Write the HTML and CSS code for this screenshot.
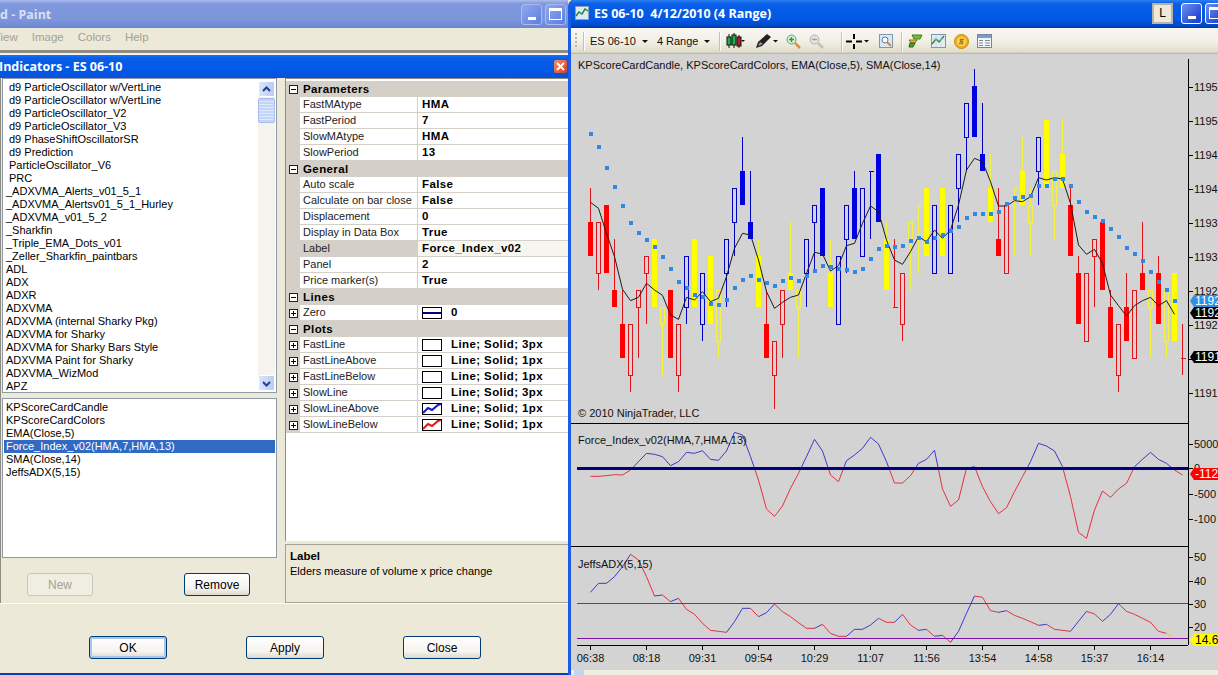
FILE: index.html
```html
<!DOCTYPE html>
<html lang="en">
<head>
    <meta charset="UTF-8">
    <title>ES 06-10 Indicators</title>
    <link rel="stylesheet" href="styles.css">
</head>
<body>

<div class="desktop">

    <!-- Paint window behind, indicators dialog in front -->
    <div class="left-side">
        <div class="paint-title">
            <span class="paint-name">d - Paint</span>
            <span class="win-btn inactive"><span class="min-mark"></span></span>
            <span class="win-btn inactive"><span class="max-mark"></span></span>
        </div>
        <div class="paint-menu">
            <span class="first-menu">View</span>
            <span>Image</span>
            <span>Colors</span>
            <span>Help</span>
        </div>
        <div class="paint-edge"></div>

        <div class="dialog">
            <div class="dialog-title">
                <span class="dialog-name">Indicators - ES 06-10</span>
                <span class="close-btn">
                    <svg width="13" height="13" viewBox="0 0 13 13"><path d="M3 3l7 7M10 3l-7 7" stroke="#fff" stroke-width="2"/></svg>
                </span>
            </div>

            <div class="dialog-body">
                <div class="dialog-left">
                    <div class="list-box available">
                        <ul class="list-items">
                            <li class="indent">d9 ParticleOscillator w/VertLine</li>
                            <li class="indent">d9 ParticleOscillator w/VertLine</li>
                            <li class="indent">d9 ParticleOscillator_V2</li>
                            <li class="indent">d9 ParticleOscillator_V3</li>
                            <li class="indent">d9 PhaseShiftOscillatorSR</li>
                            <li class="indent">d9 Prediction</li>
                            <li class="indent">ParticleOscillator_V6</li>
                            <li class="indent">PRC</li>
                            <li>_ADXVMA_Alerts_v01_5_1</li>
                            <li>_ADXVMA_Alertsv01_5_1_Hurley</li>
                            <li>_ADXVMA_v01_5_2</li>
                            <li>_Sharkfin</li>
                            <li>_Triple_EMA_Dots_v01</li>
                            <li>_Zeller_Sharkfin_paintbars</li>
                            <li>ADL</li>
                            <li>ADX</li>
                            <li>ADXR</li>
                            <li>ADXVMA</li>
                            <li>ADXVMA (internal Sharky Pkg)</li>
                            <li>ADXVMA for Sharky</li>
                            <li>ADXVMA for Sharky Bars Style</li>
                            <li>ADXVMA Paint for Sharky</li>
                            <li>ADXVMA_WizMod</li>
                            <li>APZ</li>
                        </ul>
                        <div class="scrollbar">
                            <span class="scroll-btn">
                                <svg width="9" height="7" viewBox="0 0 9 7"><path d="M1 5l3.5-3.5L8 5" fill="none" stroke="#24408a" stroke-width="2"/></svg>
                            </span>
                            <span class="scroll-thumb"></span>
                            <span class="scroll-fill"></span>
                            <span class="scroll-btn">
                                <svg width="9" height="7" viewBox="0 0 9 7"><path d="M1 2l3.5 3.5L8 2" fill="none" stroke="#24408a" stroke-width="2"/></svg>
                            </span>
                        </div>
                    </div>

                    <div class="list-box configured">
                        <ul class="list-items">
                            <li>KPScoreCardCandle</li>
                            <li>KPScoreCardColors</li>
                            <li>EMA(Close,5)</li>
                            <li class="selected">Force_Index_v02(HMA,7,HMA,13)</li>
                            <li>SMA(Close,14)</li>
                            <li>JeffsADX(5,15)</li>
                        </ul>
                    </div>

                    <div class="list-actions">
                        <button class="xp-btn small" disabled>New</button>
                        <button class="xp-btn small">Remove</button>
                    </div>
                </div>

                <div class="dialog-right">
                    <div class="prop-grid">
                        <div class="prop-cat"><span class="exp"></span>Parameters</div>
                        <div class="prop-row"><span class="gutter"></span><span class="prop-name">FastMAtype</span><span class="prop-value">HMA</span></div>
                        <div class="prop-row"><span class="gutter"></span><span class="prop-name">FastPeriod</span><span class="prop-value">7</span></div>
                        <div class="prop-row"><span class="gutter"></span><span class="prop-name">SlowMAtype</span><span class="prop-value">HMA</span></div>
                        <div class="prop-row"><span class="gutter"></span><span class="prop-name">SlowPeriod</span><span class="prop-value">13</span></div>

                        <div class="prop-cat"><span class="exp"></span>General</div>
                        <div class="prop-row"><span class="gutter"></span><span class="prop-name">Auto scale</span><span class="prop-value">False</span></div>
                        <div class="prop-row"><span class="gutter"></span><span class="prop-name">Calculate on bar close</span><span class="prop-value">False</span></div>
                        <div class="prop-row"><span class="gutter"></span><span class="prop-name">Displacement</span><span class="prop-value">0</span></div>
                        <div class="prop-row"><span class="gutter"></span><span class="prop-name">Display in Data Box</span><span class="prop-value">True</span></div>
                        <div class="prop-row active"><span class="gutter"></span><span class="prop-name">Label</span><span class="prop-value">Force_Index_v02</span></div>
                        <div class="prop-row"><span class="gutter"></span><span class="prop-name">Panel</span><span class="prop-value">2</span></div>
                        <div class="prop-row"><span class="gutter"></span><span class="prop-name">Price marker(s)</span><span class="prop-value">True</span></div>

                        <div class="prop-cat"><span class="exp"></span>Lines</div>
                        <div class="prop-row"><span class="gutter"><span class="exp plus"></span></span><span class="prop-name">Zero</span><span class="prop-value"><span class="swatch"><svg width="18" height="10" viewBox="0 0 18 10"><path d="M0 5h18" stroke="#00007f" stroke-width="2"/></svg></span>0</span></div>

                        <div class="prop-cat"><span class="exp"></span>Plots</div>
                        <div class="prop-row"><span class="gutter"><span class="exp plus"></span></span><span class="prop-name">FastLine</span><span class="prop-value"><span class="swatch"></span>Line; Solid; 3px</span></div>
                        <div class="prop-row"><span class="gutter"><span class="exp plus"></span></span><span class="prop-name">FastLineAbove</span><span class="prop-value"><span class="swatch"></span>Line; Solid; 1px</span></div>
                        <div class="prop-row"><span class="gutter"><span class="exp plus"></span></span><span class="prop-name">FastLineBelow</span><span class="prop-value"><span class="swatch"></span>Line; Solid; 1px</span></div>
                        <div class="prop-row"><span class="gutter"><span class="exp plus"></span></span><span class="prop-name">SlowLine</span><span class="prop-value"><span class="swatch"></span>Line; Solid; 3px</span></div>
                        <div class="prop-row"><span class="gutter"><span class="exp plus"></span></span><span class="prop-name">SlowLineAbove</span><span class="prop-value"><span class="swatch"><svg width="18" height="10" viewBox="0 0 18 10"><path d="M0 9l5-5 4 2 6-5 3-1" fill="none" stroke="#1a1ad0" stroke-width="2"/></svg></span>Line; Solid; 1px</span></div>
                        <div class="prop-row"><span class="gutter"><span class="exp plus"></span></span><span class="prop-name">SlowLineBelow</span><span class="prop-value"><span class="swatch"><svg width="18" height="10" viewBox="0 0 18 10"><path d="M0 9l5-5 4 2 6-5 3-1" fill="none" stroke="#e01a1a" stroke-width="2"/></svg></span>Line; Solid; 1px</span></div>
                    </div>

                    <div class="prop-help">
                        <div class="help-title">Label</div>
                        <div>Elders measure of volume x price change</div>
                    </div>
                </div>
            </div>

            <div class="dialog-footer">
                <button class="xp-btn default">OK</button>
                <button class="xp-btn">Apply</button>
                <button class="xp-btn">Close</button>
            </div>
        </div>
    </div>

    <!-- Chart window -->
    <div class="chart-win">
        <div class="chart-title">
            <svg class="title-icon" width="14" height="14" viewBox="0 0 14 14">
                <rect x="0.5" y="0.5" width="13" height="13" fill="#dfe8f4" stroke="#8aa0b8"/>
                <path d="M1 10l3-4 3 2 3-5 3 2" fill="none" stroke="#1f8a3a" stroke-width="1.5"/>
            </svg>
            <span class="chart-name">ES 06-10  4/12/2010 (4 Range)</span>
            <span class="link-btn">L</span>
            <span class="win-btn"><span class="min-mark"></span></span>
            <span class="win-btn cut"><span class="max-mark"></span></span>
        </div>

        <div class="toolbar">
            <span class="gripper"></span>
            <span class="tool-sep"></span>
            <span class="tool-drop first">ES 06-10<i class="caret"></i></span>
            <span class="tool-drop">4 Range<i class="caret"></i></span>
            <span class="tool-sep"></span>
            <span class="tool-icon">
                <svg width="19" height="16" viewBox="0 0 19 16"><path d="M3 1v14M8 0v15M13 2v13" stroke="#111"/><rect x="1" y="4" width="4" height="8" fill="#22b14c" stroke="#111"/><rect x="6" y="2" width="4" height="10" fill="#22b14c" stroke="#111"/><rect x="11" y="4" width="4" height="9" fill="#b02020" stroke="#111"/><path d="M15 7h4l-2 2z" fill="#111"/></svg>
            </span>
            <span class="tool-icon pen">
                <svg width="23" height="16" viewBox="0 0 23 16"><path d="M1 15l2-6 9-8 4 3-9 9z" fill="#222"/><path d="M3 13l2-4 3 2z" fill="#999"/><path d="M18 7h5l-2.500 2.500z" fill="#111"/></svg>
            </span>
            <span class="tool-icon">
                <svg width="15" height="15" viewBox="0 0 15 15"><circle cx="5.500" cy="5.500" r="4.500" fill="#d8f0d8" stroke="#5aa070"/><path d="M3 5.500h5M5.500 3v5" stroke="#2f9a40" stroke-width="1.500"/><path d="M9 9l5 5" stroke="#e09040" stroke-width="2.500"/></svg>
            </span>
            <span class="tool-icon">
                <svg width="15" height="15" viewBox="0 0 15 15"><circle cx="5.500" cy="5.500" r="4.500" fill="#e4e4e0" stroke="#b0b0aa"/><path d="M3 5.500h5" stroke="#a0a09a" stroke-width="1.500"/><path d="M9 9l5 5" stroke="#c0c0ba" stroke-width="2.500"/></svg>
            </span>
            <span class="tool-sep wide"></span>
            <span class="tool-icon cross">
                <svg width="23" height="15" viewBox="0 0 23 15"><path d="M0 7.500h6M10 7.500h6M8 0v5M8 10v5" stroke="#000" stroke-width="2"/><path d="M18 6h5l-2.500 2.500z" fill="#111"/></svg>
            </span>
            <span class="tool-icon">
                <svg width="14" height="14" viewBox="0 0 14 14"><rect x="0.500" y="0.500" width="13" height="13" fill="#dbe7f5" stroke="#7f96b4"/><circle cx="6" cy="6" r="3" fill="#fff" stroke="#5c7896"/><path d="M8 8l4 4" stroke="#d08a3a" stroke-width="2"/></svg>
            </span>
            <span class="tool-sep"></span>
            <span class="tool-icon">
                <svg width="15" height="14" viewBox="0 0 15 14"><path d="M4 1h10l-2 4H6z" fill="#6fbf3a" stroke="#4a7a20"/><path d="M1 6h8l-2 3H3z" fill="#e8c030" stroke="#8a7010"/><path d="M2 9h5l-2 4H1z" fill="#4a9a30" stroke="#30601c"/></svg>
            </span>
            <span class="tool-icon">
                <svg width="15" height="14" viewBox="0 0 15 14"><rect x="0.500" y="0.500" width="14" height="13" fill="#e4ecf6" stroke="#7f96b4"/><path d="M1 10l4-5 3 3 5-6" fill="none" stroke="#2f8a40" stroke-width="1.500"/><path d="M1 5h13M5 1v12M10 1v12" stroke="#b4c4d8" stroke-width="0.500"/></svg>
            </span>
            <span class="tool-icon">
                <svg width="15" height="15" viewBox="0 0 15 15"><circle cx="7.500" cy="7.500" r="7" fill="#f0b020" stroke="#c08810"/><circle cx="7.500" cy="7.500" r="4.500" fill="#f8d468"/><path d="M10 5.500H6.500v2h2v2H5" fill="none" stroke="#b07808" stroke-width="1.400"/></svg>
            </span>
            <span class="tool-icon">
                <svg width="15" height="14" viewBox="0 0 15 14"><rect x="0.500" y="0.500" width="14" height="13" fill="#f2f6fb" stroke="#6f88a8"/><rect x="1" y="1" width="13" height="3" fill="#7f9cc4"/><path d="M2 6.500h4M8 6.500h5M2 9h4M8 9h5M2 11.500h4M8 11.500h5" stroke="#7f8ea4"/></svg>
            </span>
        </div>

        <div class="chart-area">
            <div class="pane pane-price">
                <svg id="price-chart" width="647" height="370" viewBox="571 54 647 370"></svg>
                <div class="pane-label">KPScoreCardCandle, KPScoreCardColors, EMA(Close,5), SMA(Close,14)</div>
                <div class="pane-copy">© 2010 NinjaTrader, LLC</div>
            </div>
            <div class="pane pane-force">
                <svg id="force-chart" width="647" height="123" viewBox="571 424 647 123"></svg>
                <div class="pane-label">Force_Index_v02(HMA,7,HMA,13)</div>
            </div>
            <div class="pane pane-adx">
                <svg id="adx-chart" width="647" height="123" viewBox="571 547 647 123"></svg>
                <div class="pane-label">JeffsADX(5,15)</div>
            </div>
        </div>

        <div class="chart-status"><span class="status-tab"></span></div>
    </div>
</div>

<script src="chart.js"></script>
</body>
</html>
```

FILE: styles.css
```css
* {
    box-sizing: border-box;
}

body {
    margin: 0;
    font-family: 'Liberation Sans', Arial, sans-serif;
    font-size: 11px;
    color: #000;
    background-color: #ece9d8;
}

.desktop {
    display: flex;
    width: 1218px;
    height: 675px;
    overflow: hidden;
}

/* left side: paint + dialog */
.left-side {
    display: flex;
    flex-direction: column;
    width: 568px;
    flex-shrink: 0;
}

.paint-title {
    display: flex;
    align-items: center;
    gap: 3px;
    height: 28px;
    padding-right: 2px;
    background: linear-gradient(#a9bcec 0, #7f97dc 4px, #7d95da 70%, #6c86d2 100%);
}

.paint-name {
    flex: 1;
    font-family: 'Open Sans', sans-serif;
    font-size: 12.5px;
    font-weight: bold;
    color: #d7e0f4;
}

.win-btn {
    display: flex;
    align-items: center;
    justify-content: center;
    width: 21px;
    height: 21px;
    border: 1px solid #fff;
    border-radius: 3px;
    background: linear-gradient(135deg, #6f90f0, #2a50d8 70%, #1c3cc0);
    flex-shrink: 0;
}

.win-btn.inactive {
    border-color: #a9bcec;
    background: linear-gradient(135deg, #8fa8ec, #5c7ee0);
}

.win-btn.cut {
    margin-right: -8px;
}

.min-mark {
    width: 8px;
    height: 3px;
    margin-top: 8px;
    background-color: #fff;
}

.max-mark {
    width: 13px;
    height: 12px;
    border: 1px solid #fff;
    border-top-width: 3px;
}

.paint-menu {
    display: flex;
    gap: 14px;
    align-items: center;
    height: 22px;
    padding-bottom: 4px;
    color: #a3a194;
    font-size: 11.5px;
    background-color: #ece9d8;
}

.first-menu {
    margin-left: -7px;
}

.paint-edge {
    height: 5px;
    background: linear-gradient(#8e8c80 0, #8e8c80 3px, #f2f2ec 3px);
}

.dialog {
    flex: 1;
    display: flex;
    flex-direction: column;
    border-bottom: 2px solid #0a3fb8;
    background-color: #ece9d8;
}

.dialog-title {
    display: flex;
    align-items: center;
    justify-content: space-between;
    height: 23px;
    padding-right: 1px;
    background: linear-gradient(#1e74f0 0, #0a5ee8 3px, #0058e6 70%, #0a50d8 100%);
}

.dialog-name {
    margin-left: -1px;
    font-family: 'Open Sans', sans-serif;
    font-size: 12.5px;
    font-weight: bold;
    color: #fff;
}

.close-btn {
    display: flex;
    width: 13px;
    height: 13px;
    border: 0;
    border-radius: 2px;
    background: linear-gradient(135deg, #f09070, #d83c1c);
}

.dialog-body {
    display: flex;
    height: 526px;
    border-bottom: 1px solid #fff;
}

.dialog-left {
    width: 285px;
    padding-left: 1px;
    border-left: 1px solid #8e8c80;
    flex-shrink: 0;
}

.list-box {
    display: flex;
    width: 275px;
    border: 1px solid #8e9aa8;
    background-color: #fff;
    overflow: hidden;
}

.available {
    height: 315px;
    padding: 2px 1px 1px 3px;
}

.configured {
    height: 160px;
    margin-top: 5px;
    padding: 2px 1px 1px 1px;
}

.list-items {
    flex: 1;
    margin: 0;
    padding: 0;
    list-style: none;
}

.list-items li {
    height: 13px;
    line-height: 13px;
    white-space: nowrap;
}

.available .list-items li.indent {
    padding-left: 3px;
}

.configured .list-items li {
    padding-left: 2px;
}

.configured .list-items {
    padding-top: 0;
}

.configured .list-items li.selected {
    color: #fff;
    background-color: #316ac5;
}

.scrollbar {
    display: flex;
    flex-direction: column;
    width: 17px;
    flex-shrink: 0;
    background-color: #f4f3ee;
}

.scroll-btn {
    display: flex;
    align-items: center;
    justify-content: center;
    height: 16px;
    border: 1px solid #fff;
    border-radius: 2px;
    background: linear-gradient(90deg, #dce6fb, #b8cbf4);
}

.scroll-thumb {
    height: 25px;
    margin-top: 1px;
    border: 1px solid #a8bcec;
    border-radius: 2px;
    background: repeating-linear-gradient(#c4d4f8 0, #c4d4f8 2px, #e0e8fc 2px, #e0e8fc 3px);
}

.scroll-fill {
    flex: 1;
}

.list-actions {
    display: flex;
    justify-content: space-between;
    width: 223px;
    margin: 15px 0 0 25px;
}

.xp-btn {
    width: 78px;
    height: 23px;
    padding: 0;
    font-family: inherit;
    font-size: 12px;
    color: #000;
    border: 1px solid #003c74;
    border-radius: 3px;
    background: linear-gradient(#fff, #f4f3ee 70%, #dcd8cc);
}

.xp-btn.small {
    width: 66px;
}

.xp-btn.default {
    box-shadow: inset 0 0 0 2px #a8c4ee;
}

.xp-btn:disabled {
    color: #a5a294;
    border-color: #c9c7ba;
    background: #f0eee2;
}

.dialog-right {
    flex: 1;
    display: flex;
    flex-direction: column;
    gap: 3px;
}

.prop-grid {
    height: 463px;
    padding-top: 2px;
    background-color: #fff;
    border-left: 1px solid #8e8c80;
    border-top: 1px solid #8e8c80;
    overflow: hidden;
}

.prop-cat {
    display: flex;
    align-items: center;
    height: 16px;
    padding-left: 3px;
    font-weight: bold;
    letter-spacing: 0.4px;
    font-size: 11.5px;
    background-color: #d4d0c8;
}

.exp {
    flex-shrink: 0;
    width: 9px;
    height: 9px;
    margin-right: 5px;
    border: 1px solid #222;
    background: linear-gradient(#000, #000) center / 5px 1px no-repeat #fff;
}

.exp.plus {
    margin: 0;
    background:
        linear-gradient(#000, #000) center / 5px 1px no-repeat,
        linear-gradient(#000, #000) center / 1px 5px no-repeat,
        #fff;
}

.prop-row {
    display: flex;
    height: 16px;
    line-height: 15px;
    border-bottom: 1px solid #d4d0c8;
}

.gutter {
    display: flex;
    align-items: center;
    justify-content: center;
    width: 14px;
    margin-bottom: -1px;
    flex-shrink: 0;
    background-color: #d4d0c8;
}

.prop-name {
    width: 118px;
    padding-left: 3px;
    flex-shrink: 0;
    color: #222;
    white-space: nowrap;
    border-right: 1px solid #d4d0c8;
}

.prop-value {
    display: flex;
    align-items: center;
    padding-left: 4px;
    flex: 1;
    font-weight: bold;
    font-size: 11.5px;
    letter-spacing: 0.4px;
    white-space: nowrap;
}

.prop-row.active .prop-name {
    background-color: #d4d0c8;
}

.prop-row.active .prop-value {
    background-color: #f6f5f0;
}

.swatch {
    display: flex;
    width: 20px;
    height: 12px;
    margin-right: 9px;
    border: 1px solid #000;
    background-color: #fff;
    flex-shrink: 0;
}

.prop-help {
    flex: 1;
    padding: 4px 4px;
    line-height: 15px;
    font-size: 11px;
    border: 1px solid #a5a294;
    border-right: 0;
}

.help-title {
    font-weight: bold;
    font-size: 11.5px;
}

.dialog-footer {
    display: flex;
    gap: 79px;
    padding: 32px 0 0 89px;
}

/* chart window */
.chart-win {
    flex: 1;
    display: flex;
    flex-direction: column;
    border-left: 3px solid #1a5ce8;
    border-top-left-radius: 6px;
    min-width: 0;
}

.chart-title {
    display: flex;
    align-items: center;
    height: 28px;
    padding-left: 4px;
    padding-bottom: 2px;
    background: linear-gradient(#2c80f2 0, #0a5ee8 4px, #0058e4 70%, #0048c8 92%, #0038a0 100%);
}

.title-icon {
    flex-shrink: 0;
}

.chart-name {
    flex: 1;
    margin-left: 5px;
    font-family: 'Open Sans', sans-serif;
    font-size: 12.5px;
    font-weight: bold;
    color: #fff;
    white-space: pre;
}

.link-btn {
    display: flex;
    align-items: center;
    justify-content: center;
    width: 21px;
    height: 21px;
    margin-right: 8px;
    font-size: 12px;
    border: 2px solid #b8b4a4;
    background-color: #ece9d8;
}

.chart-title .win-btn {
    margin-right: 3px;
}

.chart-title .win-btn.cut {
    margin-right: -8px;
}

.toolbar {
    display: flex;
    align-items: center;
    height: 26px;
    padding-left: 4px;
    background: linear-gradient(#f8f7f2, #f2f0e6 50%, #e0ddcc 92%, #b4b29c);
}

.gripper {
    width: 2px;
    height: 16px;
    margin-right: 6px;
    background: repeating-linear-gradient(#b8b6a8 0, #b8b6a8 2px, transparent 2px, transparent 4px);
}

.tool-sep {
    width: 1px;
    height: 19px;
    margin: 0 6px 0 0;
    background-color: #c4c2b2;
    box-shadow: 1px 0 0 #fff;
}

.tool-sep.wide {
    margin-left: 9px;
    margin-right: 4px;
}

.tool-drop {
    display: flex;
    align-items: center;
    gap: 6px;
    margin-right: 9px;
    font-size: 11px;
    color: #111;
}

.caret {
    width: 0;
    height: 0;
    border: 3px solid transparent;
    border-top: 3px solid #111;
    border-bottom: 0;
}

.tool-icon {
    display: flex;
    align-items: center;
    margin-right: 8px;
}

.tool-icon.pen {
    margin-left: 2px;
}

.tool-icon.cross {
    margin-right: 10px;
}

.tool-icon:last-child {
    margin-right: 0;
}

.chart-area {
    flex: 1;
    display: flex;
    flex-direction: column;
    background-color: #d3d3d3;
    overflow: hidden;
}

.pane {
    position: relative;
    flex-shrink: 0;
}

.pane svg {
    display: block;
    font-family: 'Liberation Sans', Arial, sans-serif;
    font-size: 11px;
}

.pane-price {
    height: 370px;
}

.pane-force,
.pane-adx {
    height: 123px;
}

.pane-label {
    position: absolute;
    left: 7px;
    top: 5px;
    color: #111;
    white-space: nowrap;
}

.pane-force .pane-label {
    top: 10px;
}

.pane-adx .pane-label {
    top: 11px;
}

.pane-copy {
    position: absolute;
    left: 7px;
    top: 353px;
    color: #111;
}

.chart-status {
    height: 5px;
    padding-left: 3px;
    background-color: #f0eee2;
}

.status-tab {
    display: block;
    width: 10px;
    height: 5px;
    background-color: #c4d4f0;
}
```

FILE: chart.js
```js
// first bar sits at x=590.5, one bar every 8px
const barX = i => 590.5 + 8 * i;

// price levels are 17px apart, y = 68.7 + 17.02 * level
const level = k => Math.round(68.7 + 17.02 * k);

// [type, wick top, body top, body bottom, wick bottom]
// R/B/Y solid, r/b/y hollow
const candles = [
    ['R',7,9,11,11], ['r',9,9,12,13], ['R',8,8,12,12], ['R',10,13,14,14], ['R',13,15,17,17],
    ['r',15,15,18,19], ['r',13,13,14,17], ['r',11,11,12,15], ['Y',10,10,14,14], ['y',14,14,15,18],
    ['R',13,13,17,17], ['r',15,15,18,19], ['b',11,11,14,15], ['Y',10,10,14,14], ['b',12,12,15,16],
    ['Y',11,11,15,15], ['y',13,13,16,17], ['b',10,10,12,14], ['b',7,7,9,11], ['B',4,6,8,8],
    ['B',6,9,10,10], ['Y',10,11,14,14], ['R',13,15,17,17], ['r',16,16,18,20], ['r',13,13,15,17],
    ['Y',9,12,13,13], ['y',13,13,14,17], ['b',10,10,12,14], ['b',8,8,9,12], ['B',7,7,11,11],
    ['Y',10,12,14,14], ['b',11,11,15,15], ['b',8,8,10,12], ['B',6,7,10,10], ['b',7,7,11,11],
    ['B',6,6,6,10], ['B',5,5,9,9], ['Y',9,10,13,13], ['R',10,14,14,14], ['r',12,12,15,16],
    ['y',9,9,10,13], ['Y',8,8,8,12], ['Y',7,7,11,11], ['b',8,8,12,12], ['Y',7,7,11,11],
    ['b',8,8,12,12], ['b',5,5,7,9], ['b',2,2,4,6], ['B',0,1,4,4], ['B',2,5,6,6],
    ['Y',5,7,9,9], ['R',7,10,11,11], ['r',8,8,12,12], ['Y',7,7,7,11], ['Y',4,6,8,8],
    ['y',7,8,9,11], ['b',4,4,6,8], ['Y',3,3,7,7], ['y',6,6,8,10], ['Y',3,5,7,7],
    ['R',7,8,11,11], ['R',11,12,15,15], ['r',12,12,16,16], ['r',10,10,11,14], ['R',9,9,13,13],
    ['R',13,14,17,17], ['r',15,15,18,19], ['R',12,14,16,16], ['r',13,13,17,17], ['R',9,12,13,13],
    ['y',13,13,14,17], ['R',11,12,15,15], ['y',13,13,16,17], ['Y',12,12,16,16], ['R',15,17,17,18]
];

const colors = { r: '#e01418', b: '#0000c0', y: '#f4f43c' };
const solid = { R: '#ff0000', B: '#0000e0', Y: '#ffff00' };

// line and dots are read in crop units, y = 60 + v / 3
const smaLine = [427,445,520,590,688,722,712,670,690,706,765,778,712,720,695,725,715,650,565,520,525,600,695,745,727,712,705,640,577,582,633,617,557,550,490,438,455,540,600,613,575,530,545,510,535,510,435,330,295,305,365,438,438,422,425,410,353,360,353,357,430,555,583,568,610,705,737,768,737,722,712,737,722,763];
const emaDots = [221,261,323,380,437,488,518,539,561,590,626,665,683,705,710,731,734,719,683,659,647,659,668,677,662,653,662,647,632,617,620,626,629,635,626,596,566,557,561,557,543,533,546,533,525,512,500,473,461,461,461,455,431,413,410,407,379,377,358,356,377,425,455,470,482,506,530,563,581,602,635,665,689,722];

// lower panes, y = 420 + v / 3
const forceLine = [169,169,167,164,165,150,125,100,103,110,137,125,97,100,92,118,121,93,37,45,110,180,267,289,258,205,160,110,58,93,165,185,122,105,85,52,72,125,189,189,167,130,118,91,207,259,240,145,140,200,245,281,263,215,170,125,70,78,93,140,230,337,355,270,213,232,207,190,140,118,97,118,130,150,165];
const adxLine = [517,490,490,470,440,403,420,470,528,525,545,535,568,583,610,631,634,637,605,565,565,590,578,552,575,590,608,625,625,613,640,649,649,628,628,615,595,607,607,583,615,631,628,649,646,667,634,580,528,532,572,577,572,586,595,605,616,613,628,631,634,604,574,582,604,583,551,574,583,595,607,634,640,655];

const timeLabels = ['06:38','08:18','09:31','09:54','10:29','11:07','11:56','13:54','14:58','15:37','16:14'];

function line(x1, y1, x2, y2, color, width) {
    return `<line x1="${x1}" y1="${y1}" x2="${x2}" y2="${y2}" stroke="${color}" stroke-width="${width || 1}"/>`;
}

function crisp(content) {
    return `<g shape-rendering="crispEdges">${content}</g>`;
}

function label(x, y, text, anchor) {
    return `<text x="${x}" y="${y}" fill="#111" text-anchor="${anchor || 'start'}">${text}</text>`;
}

function drawCandle(c, i) {
    const type = c[0];
    const x = barX(i);
    const lower = type.toLowerCase();
    const wickColor = colors[lower];
    const top = level(c[2]);
    const bottom = level(c[3]);
    let out = '';

    if (c[1] < c[2]) out += line(x, level(c[1]), x, top, type === 'Y' ? '#f4f43c' : wickColor);
    if (c[4] > c[3]) out += line(x, bottom, x, level(c[4]), type === 'Y' ? '#f4f43c' : wickColor);

    if (c[2] === c[3]) {
        // doji, just a tick
        out += line(x - 2, top + 0.5, x + 3, top + 0.5, wickColor);
    } else if (type === lower) {
        out += `<rect x="${x - 2}" y="${top + 0.5}" width="4" height="${bottom - top}" fill="none" stroke="${colors[lower]}"/>`;
    } else {
        out += `<rect x="${x - 2.5}" y="${top}" width="5" height="${bottom - top}" fill="${solid[type]}"/>`;
    }
    return out;
}

function tag(y, color, textColor, text) {
    const h = 6;
    const points = `1190,${y} 1194,${y - h} 1218,${y - h} 1218,${y + h} 1194,${y + h}`;
    return `<polygon points="${points}" fill="${color}"/>` +
        `<text x="1195" y="${y + 4}" fill="${textColor}" font-size="12">${text}</text>`;
}

function axisTick(y, text) {
    return crisp(line(1188, y + 0.5, 1193, y + 0.5, '#000')) + label(1194, y + 4, text);
}

function polyPoints(values, toY) {
    return values.map((v, i) => barX(i) + ',' + toY(v)).join(' ');
}

function drawPrice() {
    const toY = v => 60 + v / 3;
    let out = crisp(candles.map(drawCandle).join(''));

    out += `<polyline points="${polyPoints(smaLine, toY)}" fill="none" stroke="#1c1c1c"/>`;
    out += crisp(emaDots.map((v, i) => `<rect x="${barX(i) - 2}" y="${Math.round(toY(v)) - 2}" width="4" height="4" fill="#3088e4"/>`).join(''));

    const ticks = [[87,'1195'],[121,'1195'],[155,'1194'],[189,'1194'],[223,'1193'],[257,'1193'],[291,'1192'],[325,'1192'],[359,'1191'],[393,'1191']];
    out += ticks.map(t => axisTick(t[0], t[1])).join('');
    out += crisp(line(1188.5, 59, 1188.5, 424, '#000') + line(571, 423.5, 1188, 423.5, '#000'));
    out += tag(301, '#2e8fe6', '#fff', '1192');
    out += tag(313, '#000', '#fff', '1192');
    out += tag(357, '#000', '#fff', '1191');
    document.getElementById('price-chart').innerHTML = out;
}

function drawForce() {
    const toY = v => 420 + v / 3;
    const zeroY = 468;
    const pts = polyPoints(forceLine, toY);
    let out = `<defs>
        <clipPath id="above"><rect x="571" y="424" width="620" height="${zeroY - 424}"/></clipPath>
        <clipPath id="below"><rect x="571" y="${zeroY}" width="620" height="80"/></clipPath>
    </defs>`;

    out += `<polyline points="${pts}" fill="none" stroke="#3a3ad0" clip-path="url(#above)"/>`;
    out += `<polyline points="${pts}" fill="none" stroke="#e8303c" clip-path="url(#below)"/>`;
    out += crisp(line(577, zeroY, 1188, zeroY, '#00007f', 3));
    out += [[444,'5000'],[468,'0'],[494,'-500'],[519,'-100']].map(t => axisTick(t[0], t[1])).join('');
    out += crisp(line(1188.5, 424, 1188.5, 547, '#000') + line(571, 546.5, 1188, 546.5, '#000'));
    out += tag(474, '#ff0000', '#fff', '-112');
    document.getElementById('force-chart').innerHTML = out;
}

function drawAdx() {
    const toY = v => 420 + v / 3;
    let out = '';
    let color = '#3a3ad0';

    // blue going up, red going down, last piece still open
    for (let i = 1; i < adxLine.length; i++) {
        const diff = adxLine[i] - adxLine[i - 1];
        if (diff < 0) color = '#3a3ad0';
        if (diff > 0) color = '#e8303c';
        if (i === adxLine.length - 1) color = '#f0d030';
        out += line(barX(i - 1), toY(adxLine[i - 1]), barX(i), toY(adxLine[i]), color);
    }

    out += crisp(line(577, 603.5, 1188, 603.5, '#9418b4') + line(577, 638.5, 1188, 638.5, '#7a10a8'));
    out += [[557,'50'],[581,'40'],[604,'30'],[627,'20']].map(t => axisTick(t[0], t[1])).join('');
    out += crisp(line(1188.5, 547, 1188.5, 645, '#000') + line(577, 645.5, 1188, 645.5, '#000'));

    timeLabels.forEach((t, i) => {
        const x = 590.5 + 56 * i;
        out += crisp(line(x, 645, x, 650, '#000'));
        out += label(x, 662, t, 'middle');
    });
    out += tag(640, '#ffff00', '#000', '14.6');
    document.getElementById('adx-chart').innerHTML = out;
}

drawPrice();
drawForce();
drawAdx();
```
